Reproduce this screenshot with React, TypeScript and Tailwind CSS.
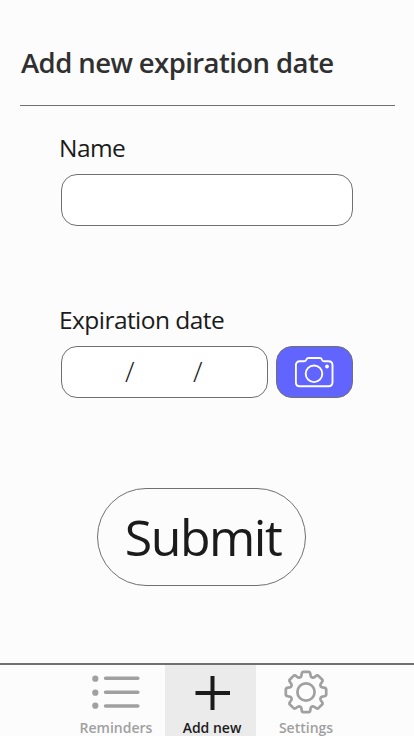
import type { ReactNode } from "react";

function gearOutline(): string {
  const points: [number, number][] = [
    [-5.4, -14.9], [-4.5, -15.6], [-4.4, -17.6], [-4.2, -20.2], [-2.6, -20.2],
    [2.6, -20.2], [4.2, -20.2], [4.4, -17.6], [4.5, -15.6], [5.4, -14.9],
  ];
  let d = "";
  for (let tooth = 0; tooth < 8; tooth++) {
    const a = (tooth * Math.PI) / 4;
    const p = points.map(
      ([x, y]) =>
        `${(x * Math.cos(a) - y * Math.sin(a)).toFixed(2)} ${(x * Math.sin(a) + y * Math.cos(a)).toFixed(2)}`,
    );
    d += `${tooth === 0 ? "M" : "L"}${p[0]}`;
    d += `Q${p[1]} ${p[2]}Q${p[3]} ${p[4]}L${p[5]}Q${p[6]} ${p[7]}Q${p[8]} ${p[9]}`;
  }
  return `${d}Z`;
}

function CameraIcon() {
  return (
    <svg width="40" height="32" viewBox="0 0 40 32" fill="none" stroke="#fff" strokeWidth="1.9">
      <path
        strokeLinejoin="round"
        d="M4.8 5.3H9.1Q10.9 5.3 11.2 3.9Q11.7 2 13.4 2H25Q26.7 2 27 3.9Q27.3 5.3 28.9 5.3H33.5Q37.5 5.3 37.5 9.3V26.2Q37.5 30.2 33.5 30.2H4.5Q.9 30.2 .9 26.2V9.3Q.9 5.3 4.8 5.3Z"
      />
      <circle cx="19" cy="17.8" r="8.3" />
      <circle cx="32" cy="10.5" r="1.9" fill="#fff" stroke="none" />
    </svg>
  );
}

function ListIcon() {
  return (
    <svg width="48" height="36" viewBox="0 0 48 36" fill="#a0a0a0">
      <circle cx="3.3" cy="5.7" r="3.1" />
      <circle cx="3.3" cy="19.7" r="3.1" />
      <circle cx="3.3" cy="32.7" r="3.1" />
      <path d="M13.6 5.3H45.8M13.6 19.2H45.8M13.6 33H45.8" stroke="#a0a0a0" strokeWidth="3.6" strokeLinecap="round" />
    </svg>
  );
}

function PlusIcon() {
  return (
    <svg className="ml-0.5 mt-1" width="36" height="36" viewBox="0 0 36 36" stroke="#1b1b1b" strokeWidth="4">
      <path d="M.5 18H35M17.5 1V35" />
    </svg>
  );
}

function GearIcon() {
  return (
    <svg className="mt-[2px]" width="44" height="44" viewBox="-22 -22 44 44" fill="none" stroke="#a0a0a0" strokeWidth="2.7" strokeLinejoin="round">
      <path d={gearOutline()} />
      <circle r="8.6" />
    </svg>
  );
}

function Tab({ icon, label, className }: { icon: ReactNode; label: string; className: string }) {
  return (
    <button className={`flex h-full flex-col items-center whitespace-nowrap text-[14px] font-semibold leading-4 ${className}`}>
      <span className="flex h-[51px] w-full items-center justify-center">{icon}</span>
      <span className="mt-1 block h-4">{label}</span>
    </button>
  );
}

export default function App() {
  return (
    <div className="flex h-[736px] w-[414px] flex-col overflow-hidden bg-[#fcfcfc] font-['Open_Sans','Noto_Sans',sans-serif] text-[#1b1b1b]">
      <header className="ml-5 mr-[19px] h-[106px] border-b border-[#707070] pt-[43px]">
        <h1 className="ml-px whitespace-nowrap text-[27.5px] font-semibold leading-10 tracking-[-0.58px] text-[#303030]">
          Add new expiration date
        </h1>
      </header>

      <main className="flex flex-1 flex-col pl-[61px]">
        <label className="-ml-0.5 mt-6 h-11 text-[24.5px] leading-9 tracking-[-0.55px]">Name</label>
        <input className="h-[52px] w-[292px] rounded-[16px] border border-[#707070] bg-white px-4 outline-none" />

        <label className="-ml-0.5 mt-[76px] h-11 text-[24.5px] leading-9 tracking-[-0.55px]">Expiration date</label>
        <div className="flex gap-2">
          <div className="flex h-[52px] w-[207px] items-center rounded-[16px] border border-[#707070] bg-white pb-0.5 pl-[63px] text-[28px] font-light leading-none">
            <span className="w-[68px]">/</span>
            <span>/</span>
          </div>
          <button className="flex h-[52px] w-[77px] items-center justify-center rounded-[16px] border border-[#707070] bg-[#6264ff]">
            <CameraIcon />
          </button>
        </div>

        <button className="ml-9 mt-[90px] flex h-[98px] w-[209px] items-center justify-center rounded-full border border-[#707070] pl-[3px] text-[50px] leading-none tracking-[-1.5px]">
          Submit
        </button>
      </main>

      <nav className="flex h-[73px] border-t-2 border-[#707070] pl-[66px]">
        <Tab icon={<ListIcon />} label="Reminders" className="w-[99px] pl-px text-[#a0a0a0]" />
        <Tab icon={<PlusIcon />} label="Add new" className="w-[91px] bg-[#ebebeb] pl-[3px]" />
        <Tab icon={<GearIcon />} label="Settings" className="w-[100px] text-[#a0a0a0]" />
      </nav>
    </div>
  );
}
